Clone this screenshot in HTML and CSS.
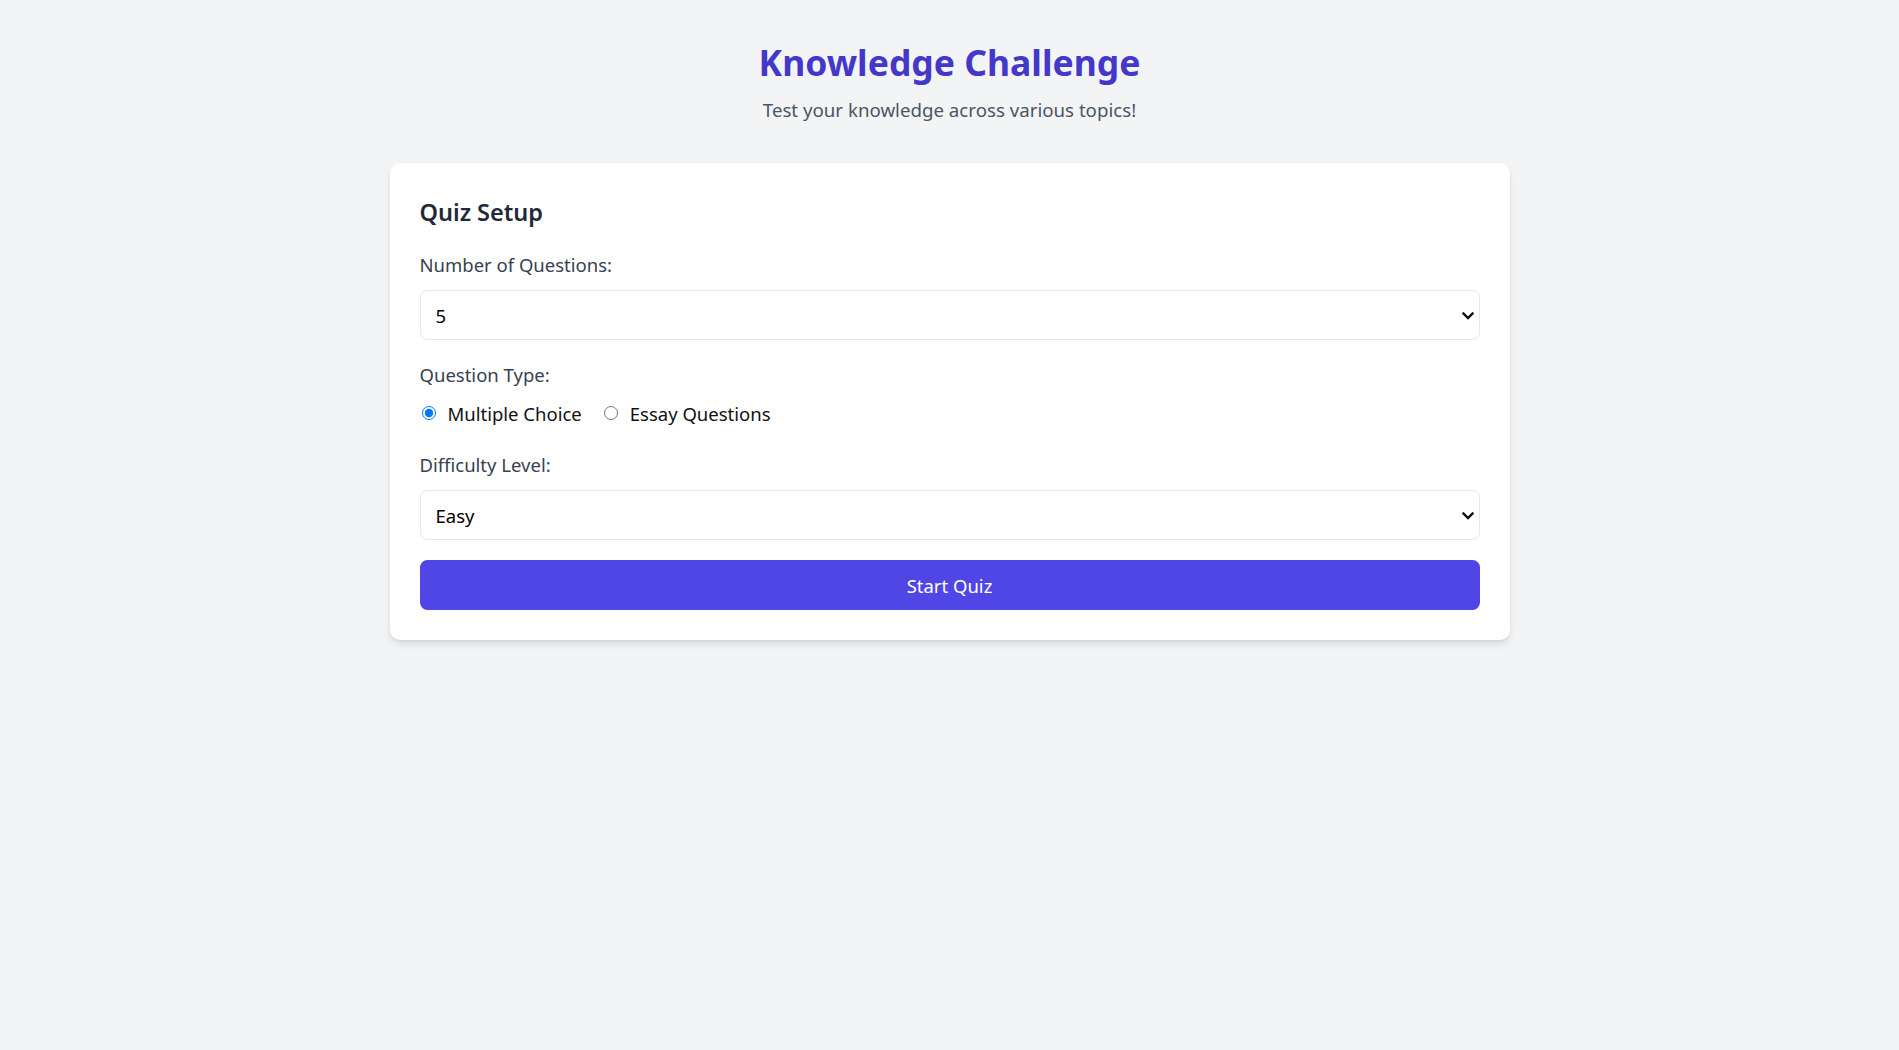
FILE: index.html
```html
<!DOCTYPE html>
<html lang="en">
<head>
<meta charset="utf-8">
<title>Knowledge Challenge</title>
<link rel="stylesheet" href="styles.css">
</head>
<body>
<div class="container">
  <header class="header">
    <h1 class="title">Knowledge Challenge</h1>
    <p class="subtitle">Test your knowledge across various topics!</p>
  </header>
  <section class="card">
    <h2 class="card-title">Quiz Setup</h2>
    <div class="field">
      <label class="label" for="count">Number of Questions:</label>
      <div class="select-wrap">
        <select id="count" class="select">
          <option>5</option>
          <option>10</option>
          <option>15</option>
        </select>
        <svg class="chev" width="12" height="8" viewBox="0 0 12 8"><path d="M1.5 1.5 L6 6 L10.5 1.5" fill="none" stroke="#111" stroke-width="2.4" stroke-linecap="square"/></svg>
      </div>
    </div>
    <div class="field field-radios">
      <span class="label">Question Type:</span>
      <div class="radios">
        <label class="radio"><input type="radio" name="qt" checked><span>Multiple Choice</span></label>
        <label class="radio"><input type="radio" name="qt"><span>Essay Questions</span></label>
      </div>
    </div>
    <div class="field">
      <label class="label" for="diff">Difficulty Level:</label>
      <div class="select-wrap">
        <select id="diff" class="select">
          <option>Easy</option>
          <option>Medium</option>
          <option>Hard</option>
        </select>
        <svg class="chev" width="12" height="8" viewBox="0 0 12 8"><path d="M1.5 1.5 L6 6 L10.5 1.5" fill="none" stroke="#111" stroke-width="2.4" stroke-linecap="square"/></svg>
      </div>
    </div>
    <button class="btn">Start Quiz</button>
  </section>
</div>
</body>
</html>
```

FILE: styles.css
```css
* { box-sizing: border-box; }
html, body { margin: 0; padding: 0; }
body {
  background: #f3f4f6;
  font-family: "Noto Sans", "Open Sans", sans-serif;
  color: #111827;
  min-height: 1050px;
}
.container {
  max-width: 1152px;
  margin: 0 auto;
  padding: 40px 16px;
}
.header {
  text-align: center;
  margin-bottom: 38px;
}
.title {
  margin: 0 0 10px;
  font-size: 35.5px;
  line-height: 45px;
  font-weight: 700;
  color: #4338ca;
}
.subtitle {
  margin: 0;
  font-size: 18.7px;
  line-height: 30px;
  color: #4b5563;
}
.card {
  max-width: 1120px;
  margin: 0 auto;
  background: #fff;
  border-radius: 10px;
  padding: 32px 30px 30px;
  box-shadow: 0 5px 8px -1px rgba(0,0,0,.1), 0 2px 5px -2px rgba(0,0,0,.1);
}
.card-title {
  margin: 0 0 20px;
  font-size: 23.5px;
  line-height: 35px;
  font-weight: 600;
  color: #1f2937;
}
.field { margin-bottom: 20px; }
.field-radios { margin-bottom: 22px; }
.label {
  display: block;
  font-size: 18.5px;
  line-height: 30px;
  color: #374151;
  margin-bottom: 10px;
}
.select-wrap { position: relative; }
.select {
  display: block;
  width: 100%;
  height: 50px;
  appearance: none;
  -webkit-appearance: none;
  background: #fff;
  border: 1px solid #e5e7eb;
  border-radius: 7.5px;
  padding: 0 15px;
  font-family: inherit;
  font-size: 18.5px;
  color: #000;
  outline: none;
}
.chev {
  position: absolute;
  right: 6px;
  top: 22px;
  pointer-events: none;
}
.radios {
  display: flex;
  align-items: center;
  height: 30px;
  margin-top: -2px;
}
.radio {
  display: inline-flex;
  align-items: center;
  gap: 12px;
  margin-right: 20px;
  font-size: 18.5px;
  color: #111;
}
.radio input {
  margin: 0 0 0 2px;
  width: 14px;
  height: 14px;
}
.btn {
  display: block;
  width: 100%;
  height: 50px;
  border: 0;
  border-radius: 7.5px;
  background: #4f46e5;
  color: #fff;
  font-family: inherit;
  font-size: 18.5px;
}
```
